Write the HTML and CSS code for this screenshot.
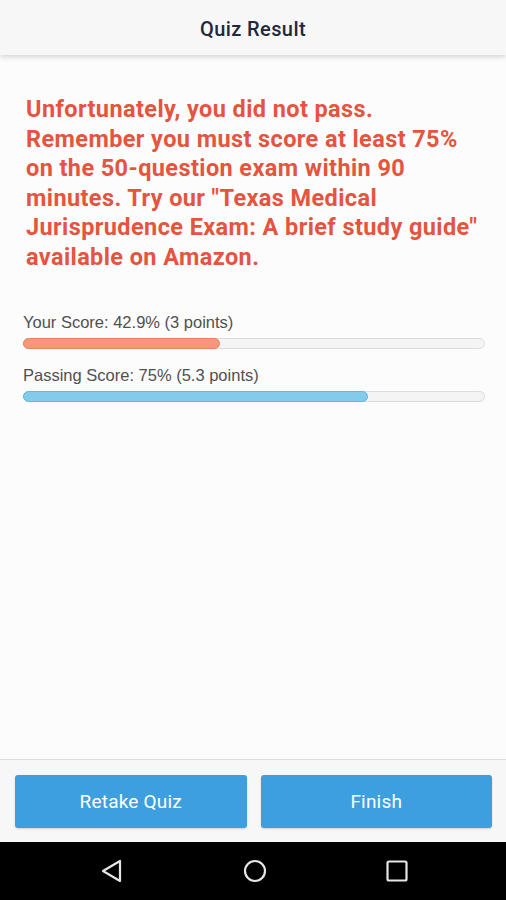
FILE: index.html
```html
<!DOCTYPE html>
<html lang="en">
<head>
    <meta charset="UTF-8">
    <meta name="viewport" content="width=device-width, initial-scale=1.0">
    <title>Quiz Result</title>
    <link rel="stylesheet" href="styles.css">
</head>
<body>
    <div class="app">
        <header class="topbar">
            <h1>Quiz Result</h1>
        </header>

        <main class="content">
            <p class="result-msg">Unfortunately, you did not pass. Remember you must score at least 75% on the 50-question exam within 90 minutes. Try our "Texas Medical Jurisprudence Exam: A brief study guide" available on Amazon.</p>

            <div class="score">
                <div class="score-label">Your Score: 42.9% (3 points)</div>
                <div class="track"><div class="fill fill-yours" style="width: 42.9%"></div></div>
            </div>
            <div class="score">
                <div class="score-label">Passing Score: 75% (5.3 points)</div>
                <div class="track"><div class="fill fill-pass" style="width: 75%"></div></div>
            </div>
        </main>

        <footer class="actions">
            <button class="btn">Retake Quiz</button>
            <button class="btn">Finish</button>
        </footer>

        <nav class="sysnav">
            <svg width="24" height="24" viewBox="0 0 24 24"><path d="M20 2 L20 22 L3 12 Z" fill="none" stroke="#e6e6e6" stroke-width="2.2" stroke-linejoin="round"/></svg>
            <svg width="24" height="24" viewBox="0 0 24 24"><circle cx="12" cy="12" r="10" fill="none" stroke="#e6e6e6" stroke-width="2.2"/></svg>
            <svg width="24" height="24" viewBox="0 0 24 24"><rect x="2.5" y="2.5" width="19" height="19" rx="1.5" fill="none" stroke="#e6e6e6" stroke-width="2.2"/></svg>
        </nav>
    </div>
</body>
</html>
```

FILE: styles.css
```css
html, body {
    margin: 0;
    padding: 0;
}
body {
    font-family: Roboto, "Liberation Sans", Arial, sans-serif;
    background-color: #fafafa;
}
.app {
    width: 506px;
    height: 900px;
    display: flex;
    flex-direction: column;
    overflow: hidden;
}
.topbar {
    height: 55px;
    padding-top: 3px;
    box-sizing: border-box;
    background-color: #f7f7f7;
    box-shadow: 0 2px 5px rgba(0,0,0,0.16);
    display: flex;
    align-items: center;
    justify-content: center;
    position: relative;
    z-index: 1;
}
.topbar h1 {
    margin: 0;
    font-size: 20px;
    letter-spacing: 0.4px;
    font-weight: 500;
    color: #232840;
}
.content {
    flex: 1;
    padding: 40px 21px 0 23px;
    background-color: #fcfcfc;
}
.result-msg {
    margin: 0 0 0 3px;
    font-size: 23.5px;
    letter-spacing: 0.4px;
    line-height: 29.6px;
    font-weight: 700;
    color: #e5543f;
}
.score {
    margin-top: 39px;
}
.score + .score {
    margin-top: 16px;
}
.score-label {
    font-family: "Liberation Sans", Arial, sans-serif;
    font-size: 16.5px;
    line-height: 20px;
    color: #505050;
    margin-bottom: 6px;
}
.track {
    height: 11px;
    background-color: #f4f4f4;
    border: 1px solid #dcdcdc;
    border-radius: 6px;
    box-sizing: border-box;
    position: relative;
}
.fill {
    height: 11px;
    margin: -1px;
    border-radius: 6px;
    box-sizing: border-box;
}
.fill-yours {
    background-color: #f6977a;
    border: 1px solid #e9805f;
}
.fill-pass {
    background-color: #82cbea;
    border: 1px solid #63b6dd;
}
.actions {
    height: 83px;
    box-sizing: border-box;
    border-top: 1px solid #dedede;
    background-color: #f7f7f7;
    padding: 15px 14px 14px 15px;
    display: grid;
    grid-template-columns: 1fr 1fr;
    gap: 14px;
}
.btn {
    background-color: #3d9fe0;
    color: white;
    border: none;
    border-radius: 3px;
    font-family: Roboto, "Liberation Sans", Arial, sans-serif;
    font-size: 19px;
    letter-spacing: 0.2px;
    box-shadow: 0 1px 2px rgba(0,0,0,0.15);
}
.sysnav {
    height: 58px;
    background-color: #000;
    display: flex;
    align-items: center;
    justify-content: space-between;
    padding: 0 97px 0 100px;
}
```
